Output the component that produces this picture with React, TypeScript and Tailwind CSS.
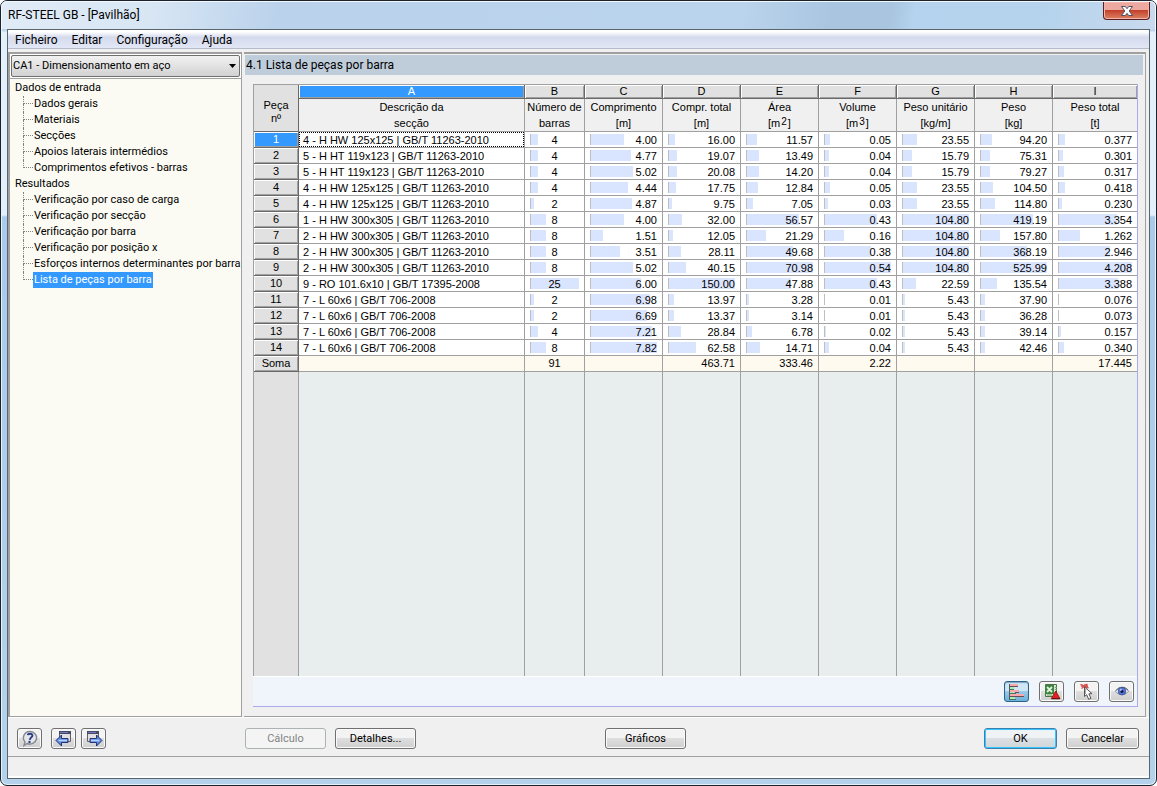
import React from "react";
import clsx from "clsx";

// --- Types ---
interface TreeGroup {
  title: string;
  items: string[];
}

interface Column {
  letter: string;
  title: string;
  unit: React.ReactNode;
  max?: number;
  total?: string;
}

interface Part {
  section: string;
  values: string[];
}

// --- Data ---
const menus = ["Ficheiro", "Editar", "Configuração", "Ajuda"];

const tree: TreeGroup[] = [
  {
    title: "Dados de entrada",
    items: [
      "Dados gerais",
      "Materiais",
      "Secções",
      "Apoios laterais intermédios",
      "Comprimentos efetivos - barras",
    ],
  },
  {
    title: "Resultados",
    items: [
      "Verificação por caso de carga",
      "Verificação por secção",
      "Verificação por barra",
      "Verificação por posição x",
      "Esforços internos determinantes por barra",
      "Lista de peças por barra",
    ],
  },
];

const activeItem = "Lista de peças por barra";

const PowerUnit = ({ power }: { power: number }) => (
  <>
    [m<span className="mx-px align-[2px] text-[10px] leading-none">{power}</span>]
  </>
);

const columns: Column[] = [
  { letter: "A", title: "Descrição da", unit: "secção" },
  { letter: "B", title: "Número de", unit: "barras", max: 25, total: "91" },
  { letter: "C", title: "Comprimento", unit: "[m]", max: 7.82 },
  { letter: "D", title: "Compr. total", unit: "[m]", max: 150, total: "463.71" },
  { letter: "E", title: "Área", unit: <PowerUnit power={2} />, max: 70.98, total: "333.46" },
  { letter: "F", title: "Volume", unit: <PowerUnit power={3} />, max: 0.54, total: "2.22" },
  { letter: "G", title: "Peso unitário", unit: "[kg/m]", max: 104.8 },
  { letter: "H", title: "Peso", unit: "[kg]", max: 525.99 },
  { letter: "I", title: "Peso total", unit: "[t]", max: 4.208, total: "17.445" },
];

const parts: Part[] = [
  { section: "4 - H HW 125x125 | GB/T 11263-2010", values: ["4", "4.00", "16.00", "11.57", "0.05", "23.55", "94.20", "0.377"] },
  { section: "5 - H HT 119x123 | GB/T 11263-2010", values: ["4", "4.77", "19.07", "13.49", "0.04", "15.79", "75.31", "0.301"] },
  { section: "5 - H HT 119x123 | GB/T 11263-2010", values: ["4", "5.02", "20.08", "14.20", "0.04", "15.79", "79.27", "0.317"] },
  { section: "4 - H HW 125x125 | GB/T 11263-2010", values: ["4", "4.44", "17.75", "12.84", "0.05", "23.55", "104.50", "0.418"] },
  { section: "4 - H HW 125x125 | GB/T 11263-2010", values: ["2", "4.87", "9.75", "7.05", "0.03", "23.55", "114.80", "0.230"] },
  { section: "1 - H HW 300x305 | GB/T 11263-2010", values: ["8", "4.00", "32.00", "56.57", "0.43", "104.80", "419.19", "3.354"] },
  { section: "2 - H HW 300x305 | GB/T 11263-2010", values: ["8", "1.51", "12.05", "21.29", "0.16", "104.80", "157.80", "1.262"] },
  { section: "2 - H HW 300x305 | GB/T 11263-2010", values: ["8", "3.51", "28.11", "49.68", "0.38", "104.80", "368.19", "2.946"] },
  { section: "2 - H HW 300x305 | GB/T 11263-2010", values: ["8", "5.02", "40.15", "70.98", "0.54", "104.80", "525.99", "4.208"] },
  { section: "9 - RO 101.6x10 | GB/T 17395-2008", values: ["25", "6.00", "150.00", "47.88", "0.43", "22.59", "135.54", "3.388"] },
  { section: "7 - L 60x6 | GB/T 706-2008", values: ["2", "6.98", "13.97", "3.28", "0.01", "5.43", "37.90", "0.076"] },
  { section: "7 - L 60x6 | GB/T 706-2008", values: ["2", "6.69", "13.37", "3.14", "0.01", "5.43", "36.28", "0.073"] },
  { section: "7 - L 60x6 | GB/T 706-2008", values: ["4", "7.21", "28.84", "6.78", "0.02", "5.43", "39.14", "0.157"] },
  { section: "7 - L 60x6 | GB/T 706-2008", values: ["8", "7.82", "62.58", "14.71", "0.04", "5.43", "42.46", "0.340"] },
];

// --- Icons ---
const HelpIcon = () => (
  <svg width="18" height="17" viewBox="0 0 18 17" fill="none">
    <path d="M9 1.5a6.7 6.3 0 1 1-3 12L3 15.5l1-3.6A6.5 6.3 0 0 1 9 1.5z" fill="#e4e6ea" stroke="#85888f" strokeWidth="1.4" />
    <path d="M6.8 5.2C7 3.4 11.6 3 11.4 5.6 11.3 7.4 9 7.4 8.8 9.8" stroke="#2b3e80" strokeWidth="1.9" />
    <circle cx="8.5" cy="12" r="1.2" fill="#2b3e80" />
  </svg>
);

const PageArrowIcon = ({ next }: { next?: boolean }) => (
  <svg width="18" height="17" viewBox="0 0 18 17" fill="none">
    <path d={next ? "M2.5 1.5h11v10h-11z" : "M4.5 1.5h11v10h-11z"} fill="#e0e0e3" stroke="#5f6064" />
    <path d={next ? "M2 1h12v3H2z" : "M4 1h12v3H4z"} fill="#454a60" />
    <path d={next ? "M3 2h8v1H3z" : "M5 2h8v1H5z"} fill="#7078c0" />
    <path
      d={next ? "M5 8.5h6.5V5l5.5 5.5-5.5 5.5v-3.5H5z" : "M13 8.5H6.5V5L1 10.5 6.5 16v-3.5H13z"}
      fill="#5c86e8"
      stroke="#23356c"
    />
    <path d={next ? "M6 10.5h8.5" : "M12 10.5H3.5"} stroke="#b5d2ff" strokeWidth="1.6" />
  </svg>
);

const BarsIcon = () => (
  <svg width="18" height="17" viewBox="0 0 18 17" fill="none" shapeRendering="crispEdges">
    <path d="M1 1h9v2H1zM2 7h9v2H2zM2 11h14v2H2z" fill="#f7a9ad" />
    <path d="M2 4h4v2H2zM2 9h6v1H2zM2 14h5v2H2z" fill="#a5f0a8" />
    <path d="M10 3H2v1h8zM11 9H7v1h4zM16 13H2v1h14z" fill="#6b4c58" />
    <path d="M2 6h4v1H2zM2 10h6v1H2zM1 16h7v1H1z" fill="#4b7064" />
    <path d="M1 1h1v16H1z" fill="#4d5b68" />
  </svg>
);

const ExcelIcon = () => (
  <svg width="18" height="17" viewBox="0 0 18 17" fill="none">
    <path d="M2.5 1.5h11v12h-11z" fill="#d9e6d4" stroke="#4d7348" />
    <path d="M2 2h9v9H2z" fill="#3d8240" />
    <path d="m4 4 5 5M9 4 4 9" stroke="#dff3da" strokeWidth="1.8" />
    <path d="M12 4.5h2M12 6.5h2M4 12h5" stroke="#6ea269" />
    <path d="m12.7 8 4.3 7.6H8.3z" fill="#e02222" stroke="#8f1010" strokeWidth=".8" />
    <path d="M8.6 15.7h8.2" stroke="#5d0d0d" />
  </svg>
);

const PickIcon = () => (
  <svg width="18" height="17" viewBox="0 0 18 17" fill="none">
    <path d="m2.5 1.5 8 3.5M9.500 1 3.500 5.500M7 1v4M3 3h7" stroke="#d65050" strokeWidth="1.5" />
    <path d="M6.5 4v9.500l2.200-1.800 2 4.600 2.200-1-2-4.500 3.100-.2z" fill="#fff" stroke="#555" />
    <path d="M7.500 6v5" stroke="#aaa" />
  </svg>
);

const EyeIcon = () => (
  <svg width="18" height="17" viewBox="0 0 18 17" fill="none">
    <path d="M2.5 8.2C5 4.2 12.5 3.4 15.5 8.2 12.5 12.6 5 12.6 2.5 8.2z" fill="#f7f8fa" stroke="#8a8b90" />
    <path d="M3 7.5C6 3.2 12.5 3.2 15 7.2" stroke="#5e6066" />
    <circle cx="9" cy="8.2" r="3.8" fill="#5878d8" stroke="#344a98" strokeWidth=".8" />
    <circle cx="9" cy="8.4" r="1.5" fill="#10163a" />
    <circle cx="7.8" cy="6.8" r="1" fill="#bcd0ff" />
  </svg>
);

// --- Components ---
const buttonLook =
  "rounded-[3px] border border-[#707070] bg-linear-to-b from-[#f3f3f3] from-45% via-[#dedede] via-50% to-[#cfcfcf] shadow-[inset_0_0_0_1px_#fafafa]";

const IconButton = ({
  label,
  pressed,
  children,
}: {
  label: string;
  pressed?: boolean;
  children: React.ReactNode;
}) => (
  <button
    type="button"
    aria-label={label}
    className={clsx(
      "flex h-[21px] w-[25px] items-center justify-center",
      pressed
        ? "rounded-[3px] border border-[#2c628b] bg-linear-to-b from-[#cfe6f4] from-45% via-[#98cbe8] via-50% to-[#6cb0d8] shadow-[inset_0_1px_1px_#7ba4bd]"
        : buttonLook
    )}
  >
    {children}
  </button>
);

const TextButton = ({
  children,
  variant = "normal",
  narrow,
}: {
  children: React.ReactNode;
  variant?: "normal" | "disabled" | "default";
  narrow?: boolean;
}) => (
  <button
    type="button"
    disabled={variant === "disabled"}
    className={clsx(
      "h-[21px] pt-px",
      narrow ? "w-[73px]" : "w-[81px]",
      variant === "disabled" &&
        "rounded-[3px] border border-[#adb2b5] bg-[#f4f4f4] text-[#838383]",
      variant === "normal" && buttonLook,
      variant === "default" &&
        "rounded-[3px] border border-[#3c7fb1] bg-linear-to-b from-[#f0f3f5] from-45% via-[#dbe0e3] via-50% to-[#d0d6d9] shadow-[inset_0_0_0_1px_#35c5ff]"
    )}
  >
    {children}
  </button>
);

const Tree = () => (
  <nav className="flex-1 bg-[#fbfbf3] pt-px pl-[5px]">
    {tree.map((group) => (
      <div key={group.title}>
        <div className="h-4 leading-4">{group.title}</div>
        <ul className="pl-2">
          {group.items.map((item, index) => (
            <li key={item} className="flex h-4">
              <span className="w-[10px] shrink-0">
                <span className="block h-2 border-b border-l border-dotted border-[#808080]" />
                {index < group.items.length - 1 && (
                  <span className="block h-2 border-l border-dotted border-[#808080]" />
                )}
              </span>
              <a
                href="#"
                className={clsx(
                  "px-px leading-4 whitespace-nowrap",
                  item === activeItem && "bg-[#3399ff] text-white"
                )}
              >
                {item}
              </a>
            </li>
          ))}
        </ul>
      </div>
    ))}
  </nav>
);

const raised =
  "border-r border-b border-[#696969] shadow-[inset_1px_1px_#fff,inset_-1px_-1px_#a0a0a0] last:border-r-0";
const cell = "border-r border-b border-[#a0a0a0] last:border-r-0";
const selected = "bg-[#3399ff] text-white";

const PartsTable = () => (
  <table className="h-full w-full table-fixed border-separate border-spacing-0 border-t border-l border-[#a0a0a0] font-['Liberation_Sans',Arial,sans-serif]">
    <colgroup>
      <col className="w-[45px]" />
      <col />
      <col className="w-[60px]" />
      <col className="w-[78px]" />
      <col className="w-[78px]" />
      <col className="w-[78px]" />
      <col className="w-[78px]" />
      <col className="w-[78px]" />
      <col className="w-[78px]" />
      <col className="w-[84px]" />
    </colgroup>
    <thead>
      <tr className="h-[14px]">
        <th
          rowSpan={2}
          className="border-r border-b border-[#696969] bg-[#e1e1e1] pt-2 leading-[13px] font-normal"
        >
          Peça
          <br />
          nº
        </th>
        {columns.map((column) => (
          <th
            key={column.letter}
            className={clsx(
              "h-[14px] p-0 leading-[13px] font-normal",
              raised,
              column.letter === "A" ? selected : "bg-[#e1e1e1]"
            )}
          >
            {column.letter}
          </th>
        ))}
      </tr>
      <tr className="h-[33px]">
        {columns.map((column) => (
          <th
            key={column.letter}
            className={clsx(
              "h-[33px] bg-[#f0f0f0] p-0 align-top leading-4 font-normal whitespace-nowrap",
              cell
            )}
          >
            {column.title}
            <br />
            {column.unit}
          </th>
        ))}
      </tr>
    </thead>
    <tbody>
      {parts.map((part, row) => (
        <tr key={row} className="h-4">
          <th
            className={clsx(
              "h-4 p-0 leading-[15px] font-normal",
              raised,
              row === 0 ? selected : "bg-[#e1e1e1]"
            )}
          >
            {row + 1}
          </th>
          <td className={clsx("h-4 bg-white p-0", cell)}>
            <div
              className={clsx(
                "h-[15px] pl-1 leading-4 whitespace-nowrap",
                row === 0 && "outline-1 -outline-offset-1 outline-black outline-dotted"
              )}
            >
              {part.section}
            </div>
          </td>
          {part.values.map((value, index) => (
            <td key={index} className={clsx("h-4 bg-white p-0", cell)}>
              <div className="grid h-[15px] grid-rows-[15px] px-[5px] leading-4">
                <span
                  className="col-start-1 row-start-1 my-[2px] border-l border-[#bfbfbf] bg-[#d9e4ff]"
                  style={{
                    width: `${(Number(value) / (columns[index + 1].max ?? 1)) * 100}%`,
                  }}
                />
                <span
                  className={clsx(
                    "col-start-1 row-start-1",
                    index === 0 ? "text-center" : "text-right"
                  )}
                >
                  {value}
                </span>
              </div>
            </td>
          ))}
        </tr>
      ))}
      <tr className="h-4">
        <th className={clsx("h-4 bg-[#e1e1e1] p-0 leading-[15px] font-normal", raised)}>
          Soma
        </th>
        {columns.map((column, index) => (
          <td
            key={column.letter}
            className={clsx(
              "h-4 bg-[#fffaef] px-[5px] py-0 leading-[15px]",
              cell,
              index === 1 ? "text-center" : "text-right"
            )}
          >
            {column.total}
          </td>
        ))}
      </tr>
      <tr>
        <td className="border-r border-[#a0a0a0] bg-[#e1e1e1] p-0" />
        {columns.map((column) => (
          <td
            key={column.letter}
            className="border-r border-[#a0a0a0] bg-[#e8eeee] p-0 last:border-r-0"
          />
        ))}
      </tr>
    </tbody>
  </table>
);

const TitleBar = () => (
  <header className="flex h-[27px] items-start justify-between pl-px">
    <h1 className="pt-[5px] text-xs leading-4">RF-STEEL GB - [Pavilhão]</h1>
    <button
      type="button"
      aria-label="Fechar"
      className="flex h-[18px] w-[47px] items-center justify-center rounded-b-[4px] border border-t-0 border-[#5b1f1f] bg-linear-to-b from-[#eda9a0] from-45% via-[#c3412b] via-50% to-[#dc8062] shadow-[inset_0_0_0_1px_#f0b5ab]"
    >
      <svg width="14" height="12" viewBox="0 0 14 12" fill="none">
        <path
          d="M1.5 1.5h3.8L7 3.7l1.7-2.2h3.8L9.2 6l3.3 4.5H8.7L7 8.3l-1.7 2.2H1.5L4.8 6z"
          fill="#fff"
          stroke="#4d5365"
        />
      </svg>
    </button>
  </header>
);

export default function App() {
  return (
    <div className="h-screen bg-white font-[Roboto,Tahoma,sans-serif] text-[11px] text-black">
      <div className="flex h-full flex-col rounded-[7px] border border-[#1c222b] bg-[linear-gradient(to_bottom,#b9d1ea_0,#bdd6ee_30px,#e3effa_31px,#e3effa_214px,#a9caea_216px,#b4d2ec_100%)] px-[6px] pb-[6px] shadow-[inset_0_0_0_1px_#e6f2fb]">
        <div className="-mx-[6px] rounded-t-[6px] border border-b-0 border-[#f2f8fd] bg-[linear-gradient(100deg,#e0ebf6_0,#d8e6f4_13%,#bad2eb_24%,#bbd4ed_64%,#a9c5e0_72%,#a9c5e0_77%,#b5d3ee_79%,#b5d3ec_90%,#c9daee_100%)] px-[5px]">
          <TitleBar />
        </div>
        <div className="flex min-h-0 flex-1 flex-col border border-[#59666e] bg-[#f0f0f0]">
          <nav className="flex h-[19px] gap-[14px] border-b border-[#b6bccc] bg-linear-to-b from-white from-10% via-[#d5dbed] via-40% to-[#e2e7f6] pl-[7px] text-xs leading-5">
            {menus.map((menu) => (
              <button key={menu} type="button">
                {menu}
              </button>
            ))}
          </nav>

          <main className="mt-[3px] flex min-h-0 flex-1 border-b border-white">
            <aside className="flex w-[234px] flex-col border-2 border-r border-b border-[#a0a0a0] bg-white">
              <div className="relative m-px">
                <select
                  aria-label="Caso"
                  className="block h-[22px] w-full appearance-none rounded-[2px] border border-[#707070] bg-linear-to-b from-[#f2f2f2] to-[#d2d2d2] pt-px pl-px"
                >
                  <option>CA1 - Dimensionamento em aço</option>
                </select>
                <svg
                  className="pointer-events-none absolute top-[9px] right-1"
                  width="7"
                  height="4"
                  viewBox="0 0 7 4"
                >
                  <path d="M0 0h7L3.5 4z" fill="#000" />
                </svg>
              </div>
              <div className="border-t border-[#a0a0a0]" />
              <Tree />
            </aside>

            <section className="mr-[3px] ml-[2px] flex min-w-0 flex-1 flex-col border-t-2 border-r border-b border-[#a0a0a0]">
              <h2 className="mt-px mr-[2px] ml-px h-5 bg-[#bfccd9] pl-px text-xs leading-5">
                4.1 Lista de peças por barra
              </h2>
              <div className="mt-[9px] mr-[7px] mb-[9px] ml-[9px] flex min-h-0 flex-1 flex-col border-r border-b border-[#aaaaee] bg-[#f0f4fb]">
                <div className="min-h-0 flex-1">
                  <PartsTable />
                </div>
                <div className="flex h-[30px] items-center justify-end gap-[10px] border-t border-white pr-[3px]">
                  <IconButton label="Mostrar barras de resultados" pressed>
                    <BarsIcon />
                  </IconButton>
                  <IconButton label="Exportar para Excel">
                    <ExcelIcon />
                  </IconButton>
                  <IconButton label="Selecionar no modelo">
                    <PickIcon />
                  </IconButton>
                  <IconButton label="Ver modelo">
                    <EyeIcon />
                  </IconButton>
                </div>
              </div>
            </section>
          </main>

          <footer>
            <div className="flex h-[38px] items-center gap-[9px] pt-[3px] pr-[10px] pl-[9px]">
              <IconButton label="Ajuda">
                <HelpIcon />
              </IconButton>
              <div className="flex gap-[5px]">
                <IconButton label="Anterior">
                  <PageArrowIcon />
                </IconButton>
                <IconButton label="Seguinte">
                  <PageArrowIcon next />
                </IconButton>
              </div>
              <div className="ml-[130px] flex gap-[9px]">
                <TextButton variant="disabled">Cálculo</TextButton>
                <TextButton>Detalhes...</TextButton>
              </div>
              <div className="ml-[180px]">
                <TextButton>Gráficos</TextButton>
              </div>
              <div className="ml-auto flex gap-[9px]">
                <TextButton variant="default" narrow>
                  OK
                </TextButton>
                <TextButton narrow>Cancelar</TextButton>
              </div>
            </div>
            <div className="h-[22px] border-t border-b-2 border-t-[#a0a0a0] border-b-white" />
          </footer>
        </div>
      </div>
    </div>
  );
}
